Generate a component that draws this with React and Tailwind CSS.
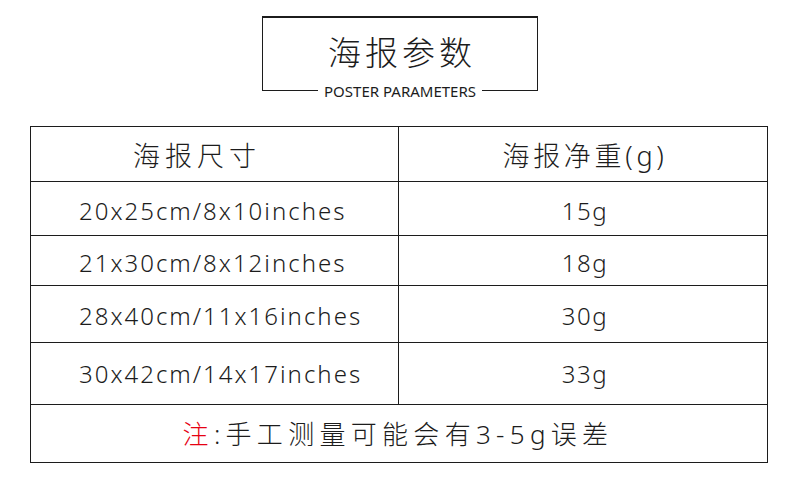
import React from 'react'

const rows = [
  { size: '20x25cm/8x10inches', weight: '15g', h: 'h-[54px]', pt: 'pt-[4px]' },
  { size: '21x30cm/8x12inches', weight: '18g', h: 'h-[50px]', pt: 'pt-[4px]' },
  { size: '28x40cm/11x16inches', weight: '30g', h: 'h-[57px]', pt: 'pt-[4px]' },
  { size: '30x42cm/14x17inches', weight: '33g', h: 'h-[62px]', pt: 'pt-[0px]' },
]

const App = () => {
  return (
    <div className="w-[800px] h-[487px] bg-white text-[#1c1c1c] overflow-hidden" style={{ fontFamily: '"Noto Sans", "Noto Sans CJK SC", sans-serif' }}>
      {/* title box */}
      <div className="w-[276px] ml-[262px] pt-[16px]">
        <div className="h-[67px] border-t-2 border-x border-[#1c1c1c] flex items-center justify-center pt-[4px]">
          <span className="text-[33px] leading-none tracking-[4px] pl-[4px] font-light">海报参数</span>
        </div>
        <div className="flex items-start h-[16px]">
          <div className="flex-1 h-[8px] border-l border-b border-[#1c1c1c]"></div>
          <span className="px-[6px] text-[15px] leading-[16px] whitespace-nowrap">POSTER PARAMETERS</span>
          <div className="flex-1 h-[8px] border-r border-b border-[#1c1c1c]"></div>
        </div>
      </div>

      {/* table */}
      <div className="ml-[30px] mt-[27px] w-[738px] border-t border-x border-[#1c1c1c] font-light">
        <div className="flex h-[55px] border-b border-[#1c1c1c]">
          <div className="w-[368px] border-r border-[#1c1c1c] flex items-center pl-[102px] pt-[2px]">
            <span className="text-[27px] leading-none tracking-[5px]">海报尺寸</span>
          </div>
          <div className="flex-1 flex items-center justify-center pt-[2px] pl-[4px]">
            <span className="text-[27px] leading-none tracking-[3.7px]">海报净重(g)</span>
          </div>
        </div>
        {rows.map((r) => (
          <div key={r.size} className={`flex ${r.h} border-b border-[#1c1c1c]`}>
            <div className={`w-[368px] border-r border-[#1c1c1c] flex items-center pl-[48px] ${r.pt}`}>
              <span className="text-[24px] leading-none tracking-[2px]">{r.size}</span>
            </div>
            <div className={`flex-1 flex items-center justify-center pl-[4px] ${r.pt}`}>
              <span className="text-[24px] leading-none tracking-[1.5px]">{r.weight}</span>
            </div>
          </div>
        ))}
        <div className="h-[58px] border-b border-[#1c1c1c] flex items-center justify-center pr-[2px]">
          <span className="text-[26px] leading-none tracking-[5.3px]">
            <span className="text-[#e60012]">注</span>:手工测量可能会有3-5g误差
          </span>
        </div>
      </div>
    </div>
  )
}

export default App
